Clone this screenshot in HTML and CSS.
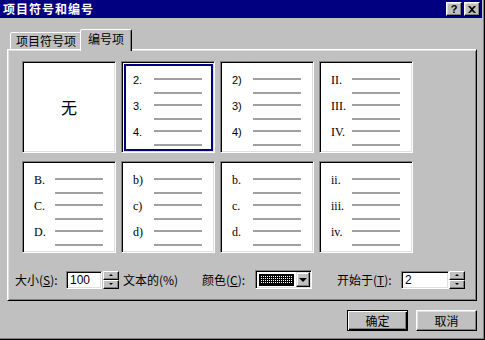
FILE: index.html
```html
<!DOCTYPE html>
<html lang="zh-CN">
<head>
<meta charset="utf-8">
<title>项目符号和编号</title>
<link rel="stylesheet" href="styles.css">
</head>
<body>
<div class="window">
  <div class="frame">
    <div class="titlebar">
      <span class="title">项目符号和编号</span>
      <div class="tb-btn help">?</div>
      <div class="tb-btn close">
        <svg width="8" height="7" viewBox="0 0 8 7"><path d="M0 0H2L4 2L6 0H8L5 3.5L8 7H6L4 5L2 7H0L3 3.5Z" fill="#000"/></svg>
      </div>
    </div>
    <div class="content">
      <div class="tabs">
        <div class="tab">项目符号项</div>
        <div class="tab active">编号项</div>
      </div>
      <div class="panel">
        <div class="grid">
          <div class="cell none">无</div>
          <div class="cell selected">
            <div class="grp"><span class="lbl sans">2.</span><span class="lines"><i></i><i></i></span></div>
            <div class="grp"><span class="lbl sans">3.</span><span class="lines"><i></i><i></i></span></div>
            <div class="grp"><span class="lbl sans">4.</span><span class="lines"><i></i><i></i></span></div>
          </div>
          <div class="cell">
            <div class="grp"><span class="lbl sans">2)</span><span class="lines"><i></i><i></i></span></div>
            <div class="grp"><span class="lbl sans">3)</span><span class="lines"><i></i><i></i></span></div>
            <div class="grp"><span class="lbl sans">4)</span><span class="lines"><i></i><i></i></span></div>
          </div>
          <div class="cell">
            <div class="grp"><span class="lbl serif">II.</span><span class="lines"><i></i><i></i></span></div>
            <div class="grp"><span class="lbl serif">III.</span><span class="lines"><i></i><i></i></span></div>
            <div class="grp"><span class="lbl serif">IV.</span><span class="lines"><i></i><i></i></span></div>
          </div>
          <div class="cell">
            <div class="grp"><span class="lbl serif">B.</span><span class="lines"><i></i><i></i></span></div>
            <div class="grp"><span class="lbl serif">C.</span><span class="lines"><i></i><i></i></span></div>
            <div class="grp"><span class="lbl serif">D.</span><span class="lines"><i></i><i></i></span></div>
          </div>
          <div class="cell">
            <div class="grp"><span class="lbl serif">b)</span><span class="lines"><i></i><i></i></span></div>
            <div class="grp"><span class="lbl serif">c)</span><span class="lines"><i></i><i></i></span></div>
            <div class="grp"><span class="lbl serif">d)</span><span class="lines"><i></i><i></i></span></div>
          </div>
          <div class="cell">
            <div class="grp"><span class="lbl serif">b.</span><span class="lines"><i></i><i></i></span></div>
            <div class="grp"><span class="lbl serif">c.</span><span class="lines"><i></i><i></i></span></div>
            <div class="grp"><span class="lbl serif">d.</span><span class="lines"><i></i><i></i></span></div>
          </div>
          <div class="cell">
            <div class="grp"><span class="lbl serif">ii.</span><span class="lines"><i></i><i></i></span></div>
            <div class="grp"><span class="lbl serif">iii.</span><span class="lines"><i></i><i></i></span></div>
            <div class="grp"><span class="lbl serif">iv.</span><span class="lines"><i></i><i></i></span></div>
          </div>
        </div>
        <div class="controls">
          <span class="lab lab-size">大小(<u>S</u>):</span>
          <div class="field f-size">100</div>
          <div class="spin gap1"><div class="sb up"><b></b></div><div class="sb down"><b></b></div></div>
          <span class="lab lab-pct">文本的(%)</span>
          <span class="lab lab-color">颜色(<u>C</u>):</span>
          <div class="combo">
            <div class="swatch">
              <svg width="35" height="12" viewBox="0 0 35 12">
                <defs><pattern id="dots" width="2" height="2" patternUnits="userSpaceOnUse"><rect x="0" y="0" width="1" height="1" fill="#fff"/></pattern></defs>
                <rect width="35" height="12" fill="#000"/>
                <rect x="2" y="2" width="31" height="8" fill="url(#dots)"/>
              </svg>
            </div>
            <div class="drop"><b></b></div>
          </div>
          <span class="lab lab-start">开始于(<u>T</u>):</span>
          <div class="field f-start">2</div>
          <div class="spin"><div class="sb up"><b></b></div><div class="sb down"><b></b></div></div>
        </div>
      </div>
      <div class="buttons">
        <div class="btn default">确定</div>
        <div class="btn">取消</div>
      </div>
    </div>
  </div>
</div>
</body>
</html>
```
FILE: styles.css
```css
* { box-sizing: border-box; }
html, body { margin: 0; padding: 0; }
body {
  width: 485px; height: 340px; overflow: hidden;
  background: #c0c0c0;
  font-family: "Noto Sans CJK SC", "Liberation Sans", sans-serif;
  font-size: 12px; color: #000;
}
.window { width: 485px; height: 340px; border-right: 1px solid #000; border-bottom: 1px solid #000; }
.frame { height: 100%; border-right: 1px solid #808080; border-bottom: 1px solid #808080; padding-right: 1px; display: flex; flex-direction: column; }

.titlebar { height: 18px; background: #000080; display: flex; align-items: center; padding: 0 2px 0 3px; }
.title { flex: 1; color: #fff; font-weight: bold; font-size: 12px; letter-spacing: 1px; line-height: 18px; }
.tb-btn {
  width: 16px; height: 14px; background: #c0c0c0;
  border: 1px solid; border-color: #fff #000 #000 #fff;
  box-shadow: inset -1px -1px #808080, inset 1px 1px #dfdfdf;
  display: flex; align-items: center; justify-content: center;
  font-family: "Liberation Sans", sans-serif; font-weight: bold; font-size: 11px; line-height: 1;
}
.tb-btn + .tb-btn { margin-left: 2px; }
.close svg { display: block; }

.content { padding: 11px 5px 0 7px; }
.tabs { display: flex; align-items: flex-end; height: 20px; }
.tab {
  background: #c0c0c0; border: 1px solid; border-bottom: 0;
  border-color: #fff #000 transparent #fff;
  border-radius: 2px 2px 0 0;
  box-shadow: inset -1px 0 #808080;
  display: flex; align-items: center; justify-content: center;
  line-height: 14px;
}
.tab:first-child { margin-left: 3px; width: 72px; height: 17px; }
.tab.active { position: relative; z-index: 2; margin-left: -2px; width: 52px; height: 22px; margin-bottom: -2px; padding-bottom: 3px; }

.panel {
  width: 470px; height: 252px;
  border: 1px solid; border-color: #fff #000 #000 #fff;
  box-shadow: inset 1px 1px #dfdfdf, inset -1px -1px #808080;
  padding: 11px 0 0 7px;
}
.grid { margin-left: 7px; display: grid; grid-template-columns: repeat(4, 94px); grid-auto-rows: 92px; column-gap: 5px; row-gap: 8px; }
.cell {
  position: relative; background: #fff;
  border: 1px solid; border-color: #808080 #fff #fff #808080;
  box-shadow: inset 1px 1px #000, inset -1px -1px #dfdfdf;
  padding: 16px 0 0 11px;
}
.cell.none { display: flex; align-items: center; justify-content: center; padding: 0; font-size: 16px; }
.cell.selected::after { content: ""; position: absolute; left: 2px; top: 2px; right: 1px; bottom: 1px; border: 2px solid #000080; }
.grp { display: flex; height: 26px; }
.lbl { width: 21px; height: 12px; line-height: 12px; margin-top: -4px; white-space: nowrap; }
.sans { font-family: "Liberation Sans", sans-serif; font-size: 11px; }
.serif { font-family: "Liberation Serif", serif; font-size: 12px; }
.lines { width: 48px; display: flex; flex-direction: column; gap: 12px; }
.lines i { display: block; height: 2px; background: #a0a0a0; }

.controls { margin-top: 17px; display: flex; align-items: center; height: 19px; }
.lab { white-space: nowrap; line-height: 14px; }
.lab-size { width: 51px; margin-left: 0; }
.lab-pct { width: 79px; margin-left: 4px; }
.lab-color { width: 53px; }
.lab-start { width: 64px; margin-left: 25px; }
.field {
  height: 18px; background: #fff;
  border: 1px solid; border-color: #808080 #fff #fff #808080;
  box-shadow: inset 1px 1px #000, inset -1px -1px #dfdfdf;
  padding: 0 0 0 3px; line-height: 16px;
  font-family: "Liberation Sans", sans-serif; font-size: 12px;
}
.f-size { width: 36px; }
.f-start { width: 48px; }
.spin { width: 16px; height: 18px; display: flex; flex-direction: column; }
.spin.gap1 { margin-left: 1px; }
.sb {
  flex: 1; background: #c0c0c0;
  border: 1px solid; border-color: #fff #000 #000 #fff;
  box-shadow: inset -1px -1px #808080;
  display: flex; align-items: center; justify-content: center;
}
.sb b { display: block; width: 0; height: 0; border-left: 2px solid transparent; border-right: 2px solid transparent; }
.sb.up b { border-bottom: 2px solid #000; }
.sb.down b { border-top: 2px solid #000; }
.combo {
  width: 57px; height: 19px; background: #fff;
  border: 1px solid; border-color: #808080 #fff #fff #808080;
  box-shadow: inset 1px 1px #000, inset -1px -1px #dfdfdf;
  display: flex; align-items: center; padding: 2px 1px 2px 2px;
}
.swatch { margin-left: 1px; width: 35px; height: 12px; }
.swatch svg { display: block; }
.drop {
  margin-left: 2px; width: 16px; height: 15px; background: #c0c0c0;
  border: 1px solid; border-color: #dfdfdf #000 #000 #dfdfdf;
  box-shadow: inset -1px -1px #808080, inset 1px 1px #fff;
  display: flex; align-items: center; justify-content: center;
}
.drop b { display: block; width: 0; height: 0; border-left: 4px solid transparent; border-right: 4px solid transparent; border-top: 4px solid #000; }

.buttons { margin-top: 9px; display: flex; justify-content: flex-end; gap: 8px; }
.btn {
  width: 61px; height: 21px; background: #c0c0c0;
  border: 1px solid; border-color: #fff #000 #000 #fff;
  box-shadow: inset -1px -1px #808080, inset 1px 1px #dfdfdf;
  display: flex; align-items: center; justify-content: center; line-height: 14px;
}
.btn.default { border-color: #000; box-shadow: inset 1px 1px #fff, inset -1px -1px #000, inset -2px -2px #808080; }
```
